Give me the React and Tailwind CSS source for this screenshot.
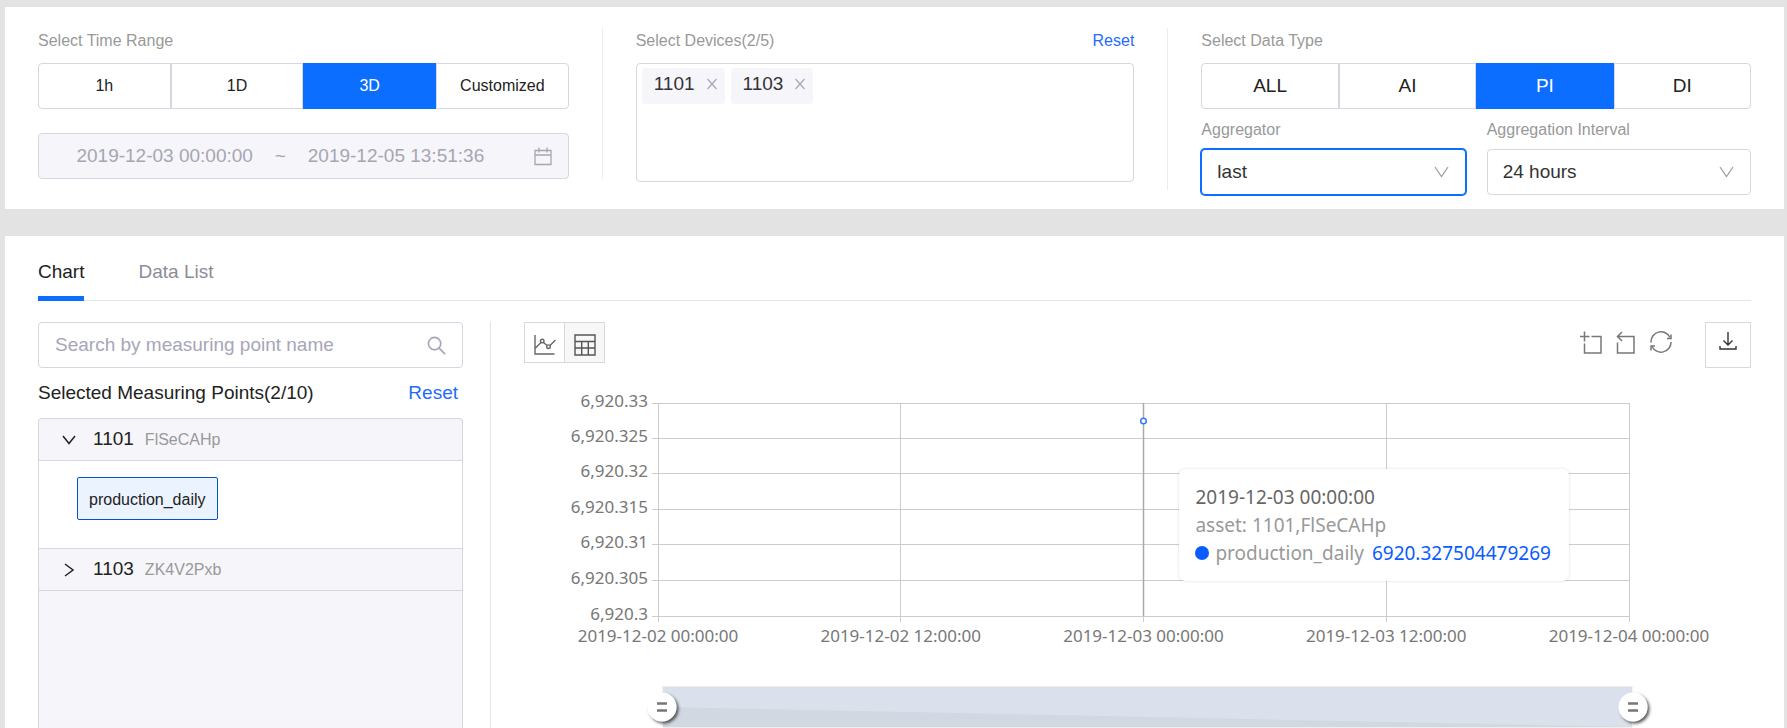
import { useState } from "react";

const TIME_RANGES = ["1h", "1D", "3D", "Customized"];
const DATA_TYPES = ["ALL", "AI", "PI", "DI"];
const Y_TICKS = ["6,920.33", "6,920.325", "6,920.32", "6,920.315", "6,920.31", "6,920.305", "6,920.3"];
const Y_POS = [4, 39, 74, 110, 145, 181, 217];
const X_TICKS = [
  "2019-12-02 00:00:00",
  "2019-12-02 12:00:00",
  "2019-12-03 00:00:00",
  "2019-12-03 12:00:00",
  "2019-12-04 00:00:00",
];

function SegmentedControl({ options, value, onChange, textSize }) {
  return (
    <div className={`flex h-[46px] ${textSize}`}>
      {options.map((option) => (
        <button
          key={option}
          type="button"
          onClick={() => onChange(option)}
          className={
            option === value
              ? "flex-1 cursor-pointer border border-[#0b6eff] bg-[#0b6eff] text-white"
              : "flex-1 cursor-pointer border border-[#d6d6e0] bg-white text-[#222] first:rounded-l-sm last:rounded-r-sm"
          }
        >
          {option}
        </button>
      ))}
    </div>
  );
}

function DeviceTag({ name, onRemove }) {
  return (
    <span className="flex h-9 items-start gap-3 rounded-sm bg-[#f5f5fa] pt-1 pr-2 pl-3 text-[19px] leading-6 text-[#333]">
      {name}
      <button type="button" aria-label={`Remove ${name}`} onClick={onRemove} className="mt-1.5 cursor-pointer">
        <svg width="10" height="12" viewBox="0 0 10 12" fill="none" stroke="#a6a6b8" strokeWidth="1.2">
          <path d="M.5 1l9 10M9.500 1l-9 10" />
        </svg>
      </button>
    </span>
  );
}

function SelectBox({ id, label, value, onChange, options, className }) {
  return (
    <div className="flex-1">
      <label htmlFor={id} className="mb-[7px] block text-[16px] leading-6 text-[#999]">
        {label}
      </label>
      <div className="relative">
        <select
          id={id}
          value={value}
          onChange={(e) => onChange(e.target.value)}
          className={`block h-[46px] w-full appearance-none rounded-sm border bg-white px-[15px] text-[19px] text-[#333] outline-none ${className}`}
        >
          {options.map((o) => (
            <option key={o}>{o}</option>
          ))}
        </select>
        <svg className="pointer-events-none absolute top-[17px] right-[17px]" width="15" height="12" viewBox="0 0 15 12" fill="none" stroke="#a0a0b0" strokeWidth="1.3">
          <path d="M1 1l6.500 9.500L14 1" />
        </svg>
      </div>
    </div>
  );
}

function Handle({ x }) {
  return (
    <svg x={x} y="0" overflow="visible">
      <path d="M0 0V42" stroke="#fff" strokeWidth="1.500" />
      <circle cx="0" cy="20" r="14.500" fill="#fff" filter="url(#handle-shadow)" />
      <path d="M-5 16.500H5M-5 23.500H5" stroke="#777" strokeWidth="2.500" />
    </svg>
  );
}

function TrendChart() {
  const [range, setRange] = useState([0, 100]);

  return (
    <div className="relative mr-[122px] ml-[134px]">
      <svg className="block w-full overflow-visible" height="270">
        <g stroke="#ccc" strokeWidth="1" shapeRendering="crispEdges">
          {Y_POS.map((y) => (
            <g key={y}>
              <line x1="0" x2="100%" y1={y} y2={y} />
              <line x1="-6" x2="0" y1={y} y2={y} />
            </g>
          ))}
          {X_TICKS.map((tick, i) => (
            <line key={tick} x1={`${i * 25}%`} x2={`${i * 25}%`} y1="4" y2="223" />
          ))}
        </g>
        <line x1="50%" x2="50%" y1="4" y2="217" stroke="#aaa" strokeWidth="1.500" />
        <g fill="#777" fontSize="17" fontFamily="'Noto Sans', sans-serif">
          {Y_TICKS.map((tick, i) => (
            <text key={tick} x="-10" y={Y_POS[i] + 4} textAnchor="end">
              {tick}
            </text>
          ))}
          {X_TICKS.map((tick, i) => (
            <text key={tick} x={`${i * 25}%`} y="243" textAnchor="middle">
              {tick}
            </text>
          ))}
        </g>
        <circle cx="50%" cy="22" r="2.800" fill="#fff" stroke="#2f7bff" strokeWidth="1.500" />
      </svg>

      {/* Tooltip */}
      <div className="absolute top-[70px] left-[53.7%] rounded-md bg-white py-3.5 pr-[18px] pl-4 font-['Noto_Sans',sans-serif] text-[19px] leading-7 whitespace-nowrap text-[#999] shadow-[0_0_3px_rgba(0,0,0,0.15)]">
        <p className="text-[#666]">2019-12-03 00:00:00</p>
        <p>asset: 1101,FlSeCAHp</p>
        <p className="flex items-center">
          <span className="mr-1.5 size-3.5 rounded-full bg-[#0a5cff]" />
          production_daily
          <span className="ml-2 text-[#0a5cff]">6920.327504479269</span>
        </p>
      </div>

      {/* Zoom slider */}
      <div className="relative mt-[18px] -mr-1 ml-1">
        <svg className="block w-full overflow-visible" height="41">
          <defs>
            <filter id="handle-shadow" x="-50%" y="-50%" width="200%" height="200%">
              <feDropShadow dx="2" dy="2" stdDeviation="1.500" floodColor="#333" floodOpacity="0.8" />
            </filter>
          </defs>
          <rect width="100%" height="40" fill="#dbe1ec" stroke="#ddd" />
          <svg width="100%" height="40" viewBox="0 0 100 40" preserveAspectRatio="none">
            <path d="M0 20L100 40H0Z" fill="#d1d8e2" />
          </svg>
          <Handle x={`${range[0]}%`} />
          <Handle x={`${range[1]}%`} />
        </svg>
        <input
          type="range"
          aria-label="Zoom start"
          value={range[0]}
          onChange={(e) => setRange([Math.min(Number(e.target.value), range[1]), range[1]])}
          className="pointer-events-none absolute inset-0 size-full opacity-0 [&::-webkit-slider-thumb]:pointer-events-auto"
        />
        <input
          type="range"
          aria-label="Zoom end"
          value={range[1]}
          onChange={(e) => setRange([range[0], Math.max(Number(e.target.value), range[0])])}
          className="pointer-events-none absolute inset-0 size-full opacity-0 [&::-webkit-slider-thumb]:pointer-events-auto"
        />
      </div>
    </div>
  );
}

export default function App() {
  const [timeRange, setTimeRange] = useState("3D");
  const [dataType, setDataType] = useState("PI");
  const [devices, setDevices] = useState(["1101", "1103"]);
  const [aggregator, setAggregator] = useState("last");
  const [interval, setInterval] = useState("24 hours");
  const [search, setSearch] = useState("");
  const [openGroup, setOpenGroup] = useState("1101");

  return (
    <div className="flex h-screen flex-col gap-[27px] overflow-hidden bg-[#e3e3e3] pt-[7px] pr-[3px] pl-[5px] font-['Liberation_Sans',Arial,sans-serif] text-[#222]">
      {/* Filters */}
      <section className="grid shrink-0 grid-cols-[531fr_1px_499fr_1px_550fr] items-start gap-x-[33px] bg-white pt-[21px] pr-[33px] pb-3.5 pl-[33px]">
        <div>
          <h2 className="mb-2.5 pt-px text-[16px] leading-6 text-[#999]">Select Time Range</h2>
          <SegmentedControl options={TIME_RANGES} value={timeRange} onChange={setTimeRange} textSize="text-[16px]" />
          <div className="mt-6 flex h-[46px] items-center rounded-sm border border-[#d6d6e0] bg-[#f5f5fa] px-4 text-[19px] text-[#a6a6b3]">
            <input aria-label="Start time" disabled value="2019-12-03 00:00:00" className="w-0 flex-1 text-center" />
            <span className="w-3 text-center">~</span>
            <input aria-label="End time" disabled value="2019-12-05 13:51:36" className="w-0 flex-1 text-center" />
            <svg className="ml-7" width="18" height="19" viewBox="0 0 18 19" fill="none" stroke="#a6a6b3" strokeWidth="1.300">
              <path d="M1 3.500H17V17.500H1ZM1 8H17M5 .5V5.500M13 .5V5.500" />
            </svg>
          </div>
        </div>

        <div className="h-[151px] bg-[#ebebf0]" />

        <div>
          <div className="mb-2.5 flex justify-between pt-px text-[16px] leading-6">
            <h2 className="text-[#999]">Select Devices(2/5)</h2>
            <button type="button" onClick={() => setDevices([])} className="cursor-pointer text-[#1f6bff]">
              Reset
            </button>
          </div>
          <div className="flex h-[119px] items-start gap-1.5 rounded-sm border border-[#d6d6e0] px-[5px] py-1">
            {devices.map((d) => (
              <DeviceTag key={d} name={d} onRemove={() => setDevices(devices.filter((x) => x !== d))} />
            ))}
          </div>
        </div>

        <div className="h-[162px] bg-[#ebebf0]" />

        <div>
          <h2 className="mb-2.5 pt-px text-[16px] leading-6 text-[#999]">Select Data Type</h2>
          <SegmentedControl options={DATA_TYPES} value={dataType} onChange={setDataType} textSize="text-[19px]" />
          <div className="mt-[9px] flex gap-[21px]">
            <SelectBox
              id="aggregator"
              label="Aggregator"
              value={aggregator}
              onChange={setAggregator}
              options={["last", "first", "max", "min", "avg"]}
              className="border-[#0b6eff] ring-1 ring-[#0b6eff]"
            />
            <SelectBox
              id="interval"
              label="Aggregation Interval"
              value={interval}
              onChange={setInterval}
              options={["24 hours", "12 hours", "1 hour"]}
              className="border-[#d6d6e0]"
            />
          </div>
        </div>
      </section>

      {/* Results */}
      <section className="flex min-h-0 flex-1 flex-col bg-white px-[33px]">
        <nav className="flex h-[65px] shrink-0 gap-[54px] border-b border-[#e3e3eb] text-[19px]">
          <button type="button" className="-mb-px cursor-pointer border-b-5 border-[#0b6eff] pt-3">
            Chart
          </button>
          <button type="button" className="-mb-px cursor-pointer border-b-5 border-transparent pt-3 text-[#8c8c9c]">
            Data List
          </button>
        </nav>

        <div className="flex min-h-0 flex-1 pt-[21px]">
          <aside className="flex w-[425px] shrink-0 flex-col">
            <div className="flex h-[46px] shrink-0 items-center rounded-sm border border-[#d6d6e0] px-4">
              <input
                type="text"
                aria-label="Search by measuring point name"
                placeholder="Search by measuring point name"
                value={search}
                onChange={(e) => setSearch(e.target.value)}
                className="w-0 flex-1 text-[19px] outline-none placeholder:text-[#a6a6b8]"
              />
              <svg width="19" height="19" viewBox="0 0 20 20" fill="none" stroke="#a6a6b8" strokeWidth="1.800">
                <circle cx="8" cy="8" r="6.500" />
                <path d="M12.500 12.500L19 19" />
              </svg>
            </div>

            <div className="flex h-[50px] shrink-0 items-center justify-between pr-[5px] text-[19px]">
              <h3>Selected Measuring Points(2/10)</h3>
              <button type="button" className="cursor-pointer text-[#1f6bff]">
                Reset
              </button>
            </div>

            <div className="flex-1 rounded-t-sm border border-b-0 border-[#d6d6e0] bg-[#f5f5fa]">
              <button
                type="button"
                onClick={() => setOpenGroup(openGroup === "1101" ? "" : "1101")}
                className="flex h-[42px] w-full cursor-pointer items-center border-b border-[#d6d6e0] pl-[23px] text-[19px]"
              >
                <svg width="14" height="10" viewBox="0 0 14 10" fill="none" stroke="#222" strokeWidth="1.500">
                  <path d="M1 1l6 7.500L13 1" />
                </svg>
                <span className="ml-[17px]">1101</span>
                <span className="ml-[11px] text-[16px] text-[#999]">FlSeCAHp</span>
              </button>
              {openGroup === "1101" && (
                <div className="h-[88px] border-b border-[#d6d6e0] bg-white pt-4 pl-[38px]">
                  <button type="button" className="h-[43px] cursor-pointer rounded-xs border border-[#0b4fd0] bg-[#ebf3ff] px-[11px] pt-0.5 text-[16px]">
                    production_daily
                  </button>
                </div>
              )}
              <button
                type="button"
                onClick={() => setOpenGroup(openGroup === "1103" ? "" : "1103")}
                className="flex h-[42px] w-full cursor-pointer items-center border-b border-[#d6d6e0] pl-[23px] text-[19px]"
              >
                <svg width="14" height="14" viewBox="0 0 14 14" fill="none" stroke="#222" strokeWidth="1.500">
                  <path d="M3 1l8 6L3 13" />
                </svg>
                <span className="ml-[17px]">1103</span>
                <span className="ml-[11px] text-[16px] text-[#999]">ZK4V2Pxb</span>
              </button>
            </div>
          </aside>

          <div className="mx-[27px] w-px shrink-0 bg-[#e3e3e8]" />

          <div className="ml-1.5 min-w-0 flex-1">
            <div className="flex h-[77px] items-start">
              <button type="button" aria-label="Line chart" className="flex size-[41px] cursor-pointer items-center justify-center border border-[#d9d9d9] bg-white">
                <svg className="mt-1" width="22" height="20" viewBox="0 0 22 20" fill="none" stroke="#666" strokeWidth="1.400">
                  <path d="M1 0V19H20.500M1.500 13L7 7.500M9.500 7.500L13 10.500M16 10.500L21.500 5" />
                  <circle cx="8.200" cy="6" r="1.800" />
                  <circle cx="14.500" cy="11.700" r="1.800" />
                </svg>
              </button>
              <button type="button" aria-label="Table" className="-ml-px flex size-[41px] cursor-pointer items-center justify-center border border-[#d9d9d9] bg-[#f7f7f7]">
                <svg className="mt-1" width="22" height="22" viewBox="0 0 22 22" fill="none" stroke="#555" strokeWidth="1.400">
                  <path d="M1 1H21V21H1ZM1 7.500H21M1 14H21M7.700 7.500V21M14.300 7.500V21" />
                </svg>
              </button>
              <div className="mt-[9px] ml-auto flex gap-3.5">
                <button type="button" aria-label="Zoom area" className="cursor-pointer">
                  <svg width="22" height="23" viewBox="0 0 22 23" fill="none" stroke="#777" strokeWidth="1.500">
                    <path d="M4.500 .5V10.500M0 5.500H9.500M11.500 5.500H21V22H4.500V12.500" />
                  </svg>
                </button>
                <button type="button" aria-label="Undo zoom" className="cursor-pointer">
                  <svg width="20" height="23" viewBox="0 0 20 23" fill="none" stroke="#777" strokeWidth="1.500">
                    <path d="M1.500 11.500V22H18V5.500H2M6 1L1.500 5.500L6 10" />
                  </svg>
                </button>
                <button type="button" aria-label="Restore" className="cursor-pointer">
                  <svg width="22" height="23" viewBox="0 0 22 23" fill="none" stroke="#777" strokeWidth="1.500">
                    <path d="M1 11.500A10 10 0 0 1 20 6.500M21 11A10 10 0 0 1 2 15.500" />
                    <path d="M21 3.500V7.500H17M1 19.500V15H5" />
                  </svg>
                </button>
              </div>
              <button type="button" aria-label="Download" className="ml-[33px] flex size-[46px] cursor-pointer items-center justify-center border border-[#d9d9d9]">
                <svg className="-mt-2" width="18" height="18" viewBox="0 0 18 18" fill="none" stroke="#333" strokeWidth="1.400">
                  <path d="M9 0V13M4.500 8.500L9 13L13.500 8.500M1 14V17H17V14" />
                </svg>
              </button>
            </div>

            <TrendChart />
          </div>
        </div>
      </section>
    </div>
  );
}
